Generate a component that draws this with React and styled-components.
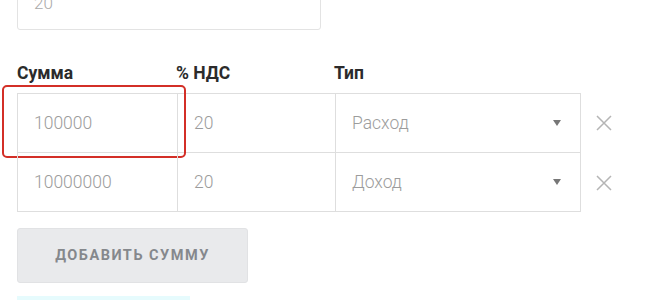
import React from "react";
import styled, { createGlobalStyle } from "styled-components";

const Global = createGlobalStyle`
  html, body {
    margin: 0;
    padding: 0;
    background: #fff;
    font-family: Roboto, "Liberation Sans", Arial, sans-serif;
    overflow: hidden;
  }
`;

const Page = styled.div`
  width: 660px;
  height: 300px;
  padding-left: 17px;
  box-sizing: border-box;
  overflow: hidden;
`;

const TopInput = styled.div`
  width: 304px;
  height: 60px;
  margin-top: -30px;
  border: 1px solid #e3e3e3;
  border-radius: 3px;
  box-sizing: border-box;
  display: flex;
  align-items: flex-end;
  padding: 0 0 16px 16px;
  color: #aaa;
  font-size: 17px;
  font-weight: 300;
`;

const Labels = styled.div`
  display: grid;
  grid-template-columns: 159px 158px 246px;
  margin-top: 30px;
  height: 33px;
  align-items: end;
  padding-bottom: 9px;
  box-sizing: border-box;
`;

const Label = styled.div`
  font-size: 17.5px;
  line-height: 21px;
  font-weight: 700;
  color: #2b2b2b;
`;

const Row = styled.div`
  position: relative;
  display: flex;
  align-items: center;
`;

const Table = styled.div`
  display: grid;
  grid-template-columns: 159px 158px 246px;
  width: 564px;
  border: 1px solid #dedede;
  border-top: ${(p) => (p.first ? "1px solid #dedede" : "none")};
  box-sizing: border-box;
  height: ${(p) => (p.first ? 60 : 59)}px;
`;

const Cell = styled.div`
  display: flex;
  align-items: center;
  justify-content: space-between;
  padding: 0 20px 0 16px;
  color: #9c9c9c;
  font-size: 17.5px;
  font-weight: 300;
  border-left: ${(p) => (p.first ? "none" : "1px solid #dedede")};
`;

const Caret = styled.span`
  width: 0;
  height: 0;
  border-left: 4px solid transparent;
  border-right: 4px solid transparent;
  border-top: 6px solid #777;
`;

const Remove = styled.button`
  margin-left: 14px;
  background: none;
  border: none;
  padding: 0;
  width: 18px;
  height: 18px;
  display: flex;
  cursor: pointer;
`;

const Highlight = styled.div`
  position: absolute;
  left: -15px;
  top: -8px;
  width: 184px;
  height: 73px;
  border: 2px solid #d32f27;
  border-radius: 5px;
  box-sizing: border-box;
  pointer-events: none;
`;

const AddButton = styled.button`
  margin-top: 16px;
  width: 231px;
  height: 55px;
  background: #e9eaec;
  border: 1px solid #e1e2e4;
  border-radius: 3px;
  color: #85888c;
  font-family: Roboto, "Liberation Sans", Arial, sans-serif;
  font-weight: 700;
  font-size: 14.5px;
  letter-spacing: 1.5px;
  cursor: pointer;
`;

const Strip = styled.div`
  margin-top: 13px;
  width: 173px;
  height: 6px;
  background: #e6fbfd;
`;

const X = () => (
  <svg width="18" height="18" viewBox="0 0 18 18">
    <path d="M2 2 L16 16 M16 2 L2 16" stroke="#b5b5b5" strokeWidth="1.5" />
  </svg>
);

const rows = [
  { sum: "100000", vat: "20", type: "Расход" },
  { sum: "10000000", vat: "20", type: "Доход" },
];

export default function App() {
  return (
    <Page>
      <Global />
      <TopInput>20</TopInput>
      <Labels>
        <Label>Сумма</Label>
        <Label>% НДС</Label>
        <Label>Тип</Label>
      </Labels>
      {rows.map((r, i) => (
        <Row key={i}>
          <Table first={i === 0}>
            <Cell first>{r.sum}</Cell>
            <Cell>{r.vat}</Cell>
            <Cell>
              {r.type}
              <Caret />
            </Cell>
          </Table>
          <Remove aria-label="remove">
            <X />
          </Remove>
          {i === 0 && <Highlight />}
        </Row>
      ))}
      <AddButton>ДОБАВИТЬ СУММУ</AddButton>
      <Strip />
    </Page>
  );
}
